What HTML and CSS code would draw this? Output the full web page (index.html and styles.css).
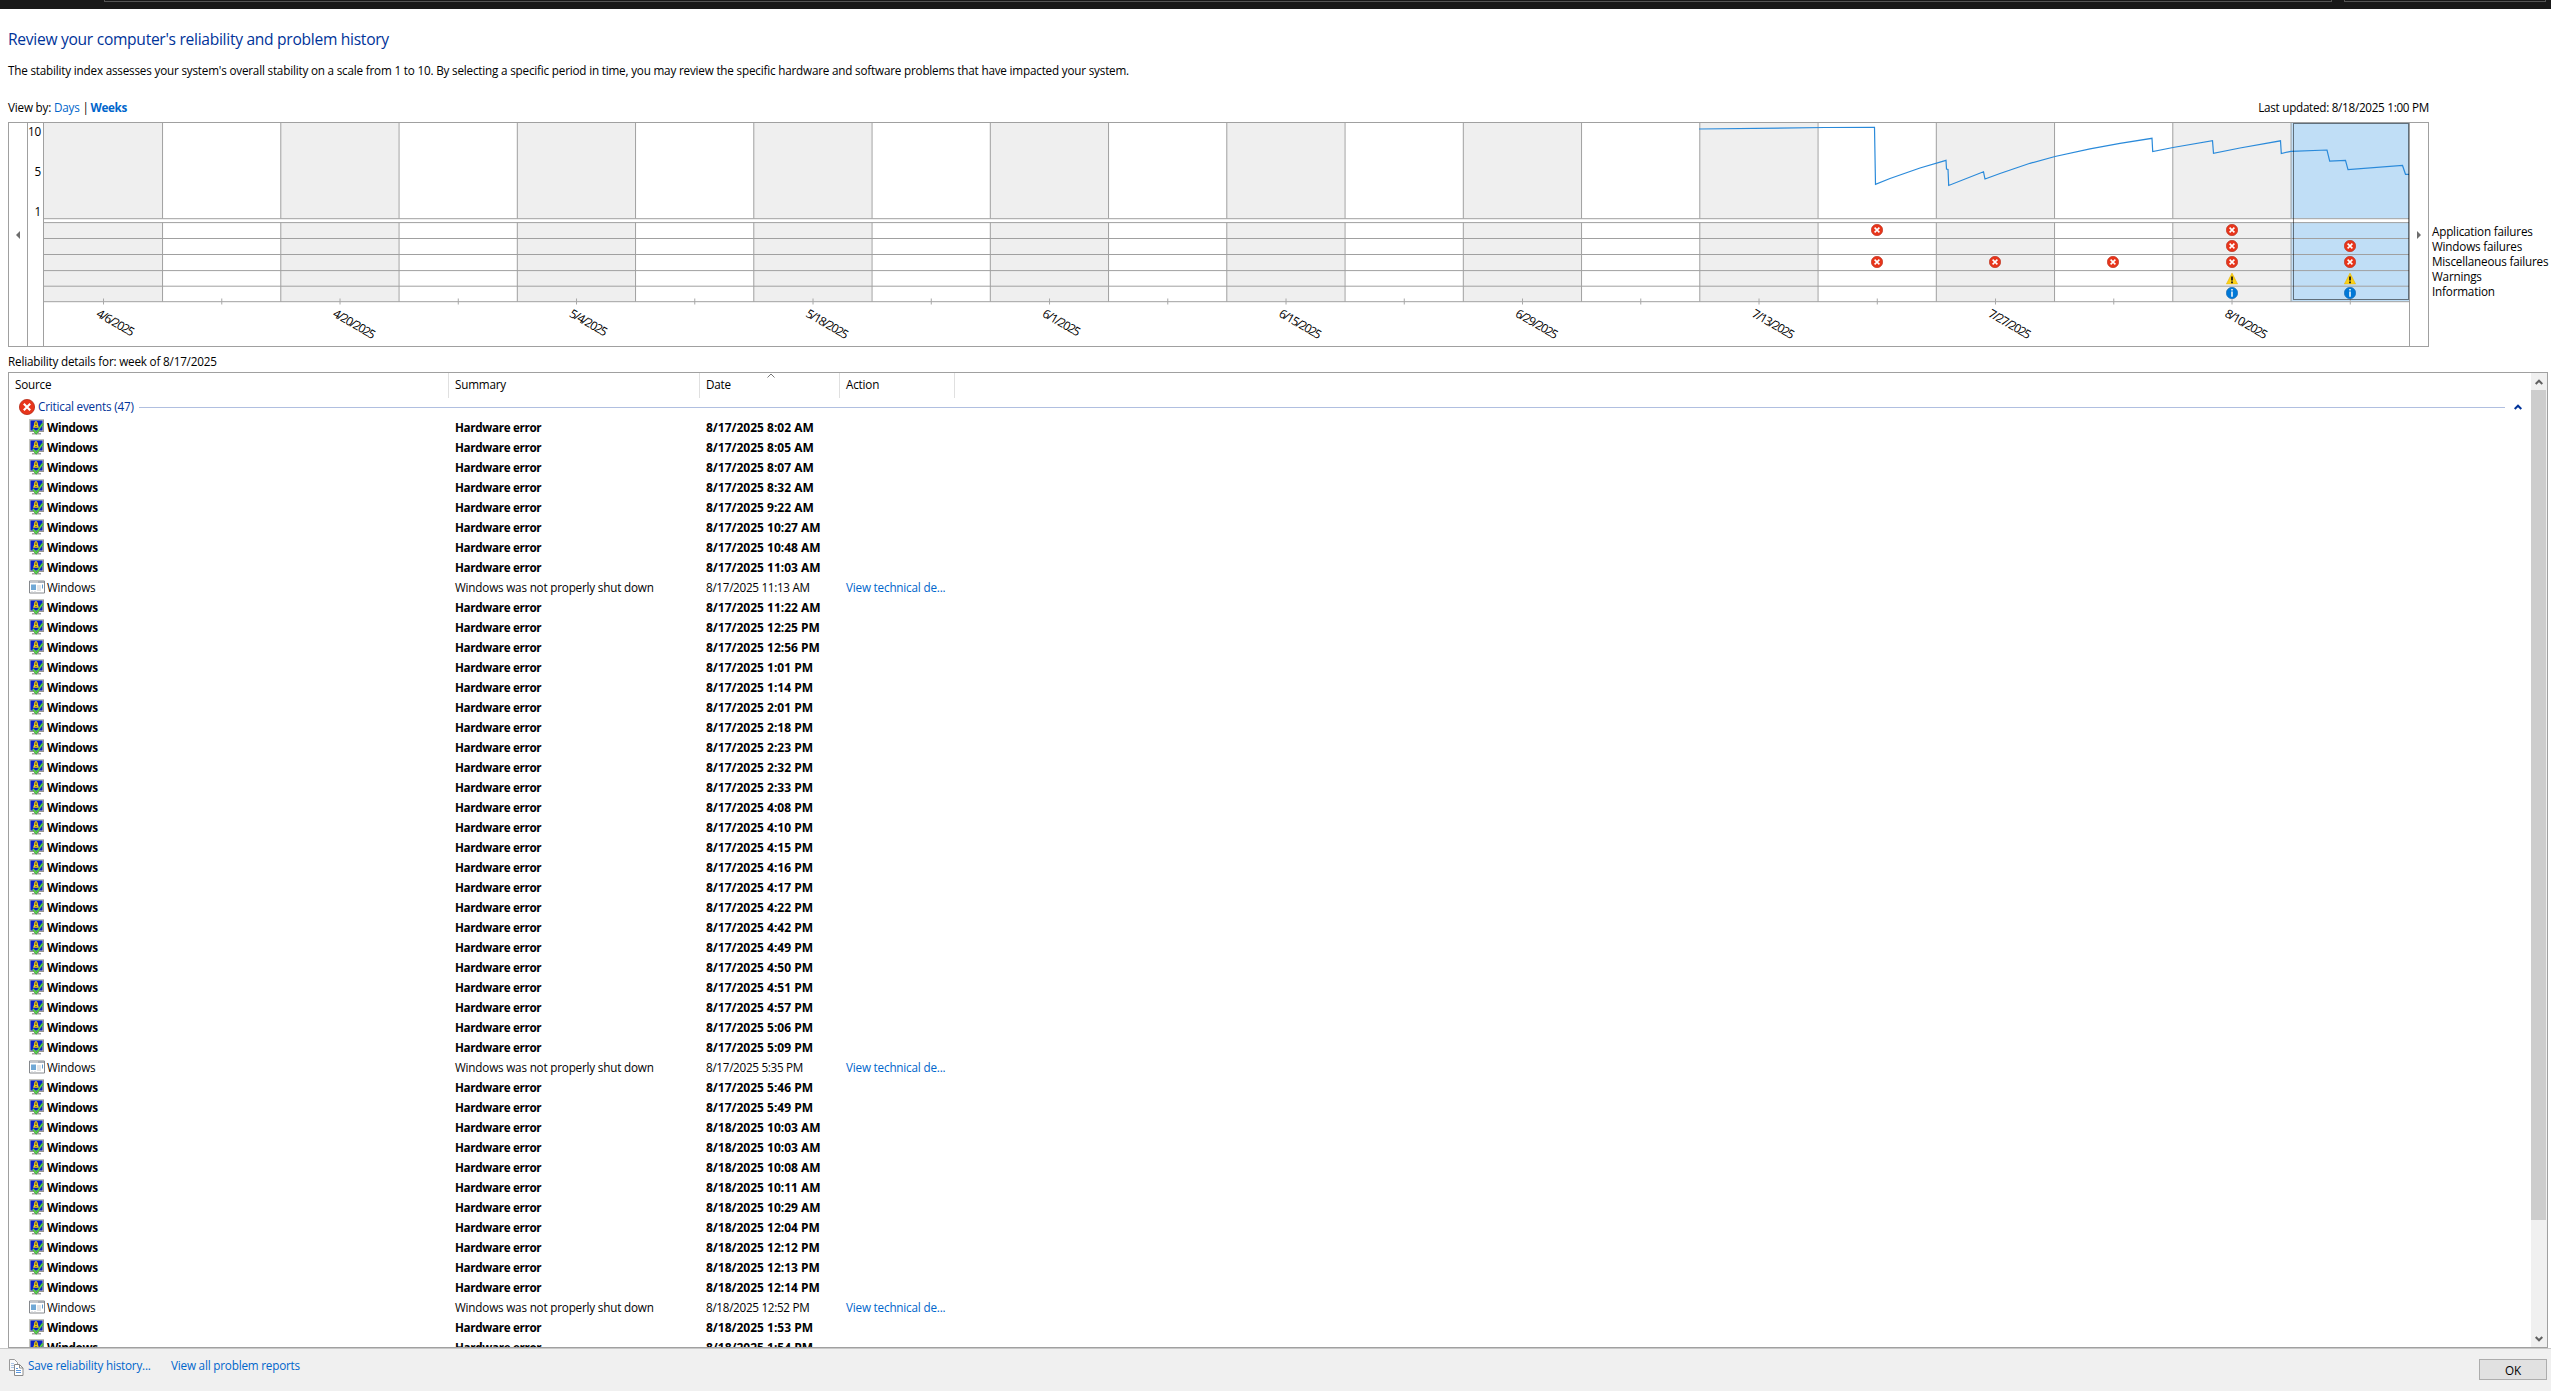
FILE: index.html
```html
<!DOCTYPE html>
<html lang="en">
<head>
  <meta charset="UTF-8" />
  <meta name="viewport" content="width=device-width, initial-scale=1.0"/>
  <title>Reliability Monitor</title>
  <link rel="stylesheet" href="styles.css">
</head>
<body>
  <svg class="sprite" xmlns="http://www.w3.org/2000/svg">
    <symbol id="icon-error" viewBox="0 0 16 16">
      <circle cx="8" cy="8" r="7.6" fill="#e8351b" stroke="#b52a15" stroke-width=".8"/>
      <path d="M4.8 4.8l6.4 6.4M11.2 4.8l-6.4 6.4" stroke="#fff" stroke-width="2.1"/>
    </symbol>
    <symbol id="icon-warning" viewBox="0 0 12 12">
      <path d="M6 .6L11.6 11.6H.4z" fill="#fcd116" stroke="#e8b400" stroke-width=".6"/>
      <path d="M6 4v4M6 9v1.7" stroke="#111" stroke-width="1.7"/>
    </symbol>
    <symbol id="icon-info" viewBox="0 0 12 12">
      <circle cx="6" cy="6" r="5.7" fill="#0078d7" stroke="#1464ac" stroke-width=".6"/>
      <path d="M6 2v1.5M6 4.5v5.3" stroke="#fff" stroke-width="1.5"/>
    </symbol>
    <symbol id="icon-monitor" viewBox="0 0 16 16">
      <path d="M0 0h15v13H0z" fill="#c4c4bc"/>
      <path d="M14 1h1v12H1v-1h13z" fill="#96968f"/>
      <path d="M1.5 1.5h12v10h-12z" fill="#0a22c8"/>
      <path d="M5 13h5v1H5zM3 14h9v1.5H3z" fill="#a5a5a0"/>
      <path d="M7 2c1.700 .2 1.800 2.300 2 3.700l1 3H4L5 5.700C5.200 4 5.300 2.200 7 2z" fill="#e8c820"/>
      <path d="M7 3.500v2.500M7 7v1" stroke="#4a3c00"/>
      <path d="M4 10l3.200 4L13.800 4.500" fill="none" stroke="#2a9a30" stroke-width="2"/>
      <path d="M4 10l3.200 4L13.800 4.500" fill="none" stroke="#5ed44e" stroke-width="1.300"/>
    </symbol>
    <symbol id="icon-window" viewBox="0 0 16 13">
      <path d="M.5 .5h15v12H.5z" fill="#fff" stroke="#85888c"/>
      <path d="M1 1h14v1.500H1z" fill="#c4c9d0"/>
      <path d="M9.500 1.500h1M11.500 1.500h1M13.500 1.500h1" stroke="#55606c"/>
      <path d="M2 4h5v5.500H2z" fill="#6fa8d6"/>
      <path d="M8 5.500h4M8 7.500h4M8 9.500h4M2 11.500h2M5 11.500h2" stroke="#c5c9ce"/>
      <path d="M13.500 4v4" stroke="#5d9bd0"/>
    </symbol>
    <symbol id="icon-copy" viewBox="0 0 15 17">
      <path d="M.5 .5h5l3 3v8h-8z" fill="#fafafa" stroke="#9a9a9a"/>
      <path d="M2 4.500h3M2 6.500h4M2 8.500h3" stroke="#a9c4e6"/>
      <path d="M5.500 5.500h5l3.500 3.500v7.500H5.500z" fill="#fff" stroke="#8a8a8a"/>
      <path d="M10.500 5.500V9H14" fill="none" stroke="#8a8a8a"/>
      <path d="M7 9.500h2M7 11.500h5M7 13.500h5" stroke="#5b97dd"/>
    </symbol>
    <symbol id="icon-chevron" viewBox="0 0 8 6">
      <path d="M.7 5L4 1.700 7.300 5" fill="none" stroke="currentColor" stroke-width="2"/>
    </symbol>
  </svg>

  <div class="titlebar">
    <div class="titlebar-main"></div>
    <div class="titlebar-side"></div>
  </div>

  <main class="content">
    <h1>Review your computer's reliability and problem history</h1>
    <p class="intro">The stability index assesses your system's overall stability on a scale from 1 to 10. By selecting a specific period in time, you may review the specific hardware and software problems that have impacted your system.</p>

    <div class="view-bar">
      <div class="view-by">View by: <a href="#">Days</a> | <a href="#" class="active">Weeks</a></div>
      <div class="updated">Last updated: 8/18/2025 1:00 PM</div>
    </div>

    <div class="chart-row">
      <div class="chart">
        <button class="scroll-btn"><svg width="4" height="8"><path d="M4 0v8L0 4z" fill="#6d6d6d"/></svg></button>
        <div class="axis"><span>10</span><span>5</span><span>1</span></div>
        <svg id="plot" class="plot" width="2365" height="223"></svg>
        <button class="scroll-btn next"><svg width="4" height="8"><path d="M0 0v8l4-4z" fill="#6d6d6d"/></svg></button>
      </div>
      <ul class="legend">
        <li>Application failures</li>
        <li>Windows failures</li>
        <li>Miscellaneous failures</li>
        <li>Warnings</li>
        <li>Information</li>
      </ul>
    </div>

    <p class="details-label">Reliability details for: week of 8/17/2025</p>

    <div class="list">
      <div class="list-body">
        <div class="list-head">
          <span>Source</span>
          <span>Summary</span>
          <span class="sorted">Date<svg width="8" height="5"><path d="M.5 4.500L4 1l3.500 3.500" fill="none" stroke="#777"/></svg></span>
          <span>Action</span>
        </div>
        <div class="group">
          <svg width="16" height="16"><use href="#icon-error"/></svg>
          <span class="group-name">Critical events (47)</span>
          <span class="group-line"></span>
          <svg class="collapse" width="8" height="6"><use href="#icon-chevron"/></svg>
        </div>
        <div id="rows"></div>
      </div>
      <div class="scrollbar">
        <svg width="8" height="6"><use href="#icon-chevron"/></svg>
        <div class="thumb"></div>
        <svg class="down" width="8" height="6"><use href="#icon-chevron"/></svg>
      </div>
    </div>
  </main>

  <footer>
    <svg width="15" height="17"><use href="#icon-copy"/></svg>
    <a href="#" class="save">Save reliability history...</a>
    <a href="#" class="reports">View all problem reports</a>
    <button class="ok">OK</button>
  </footer>
  <script src="monitor.js"></script>
</body>
</html>
```
FILE: styles.css
```css
* {
  box-sizing: border-box;
  margin: 0;
  padding: 0;
}
body {
  display: flex;
  flex-direction: column;
  height: 1391px;
  overflow: hidden;
  background: #fff;
  color: #000;
  font-family: 'Open Sans', 'Noto Sans', sans-serif;
  font-size: 11.7px;
  letter-spacing: -0.19px;
  line-height: 16px;
  white-space: nowrap;
}
a {
  color: #0066cc;
  text-decoration: none;
}
.sprite {
  display: none;
}
.titlebar {
  display: flex;
  gap: 12px;
  height: 9px;
  padding: 0 5px 0 104px;
  background: #191919;
}
.titlebar div {
  height: 2px;
  border: 1px solid #555;
  border-top: none;
}
.titlebar-main {
  flex: 1;
}
.titlebar-side {
  width: 202px;
}
.content {
  flex: 1;
  padding: 0 3px 0 8px;
}
h1 {
  margin-top: 19px;
  font-size: 15.6px;
  font-weight: normal;
  line-height: 22px;
  letter-spacing: -0.29px;
  color: #003399;
}
.intro {
  margin-top: 12px;
}
.view-bar {
  display: flex;
  justify-content: space-between;
  width: 2421px;
  margin-top: 21px;
}
.view-by .active {
  margin-left: -1px;
  font-weight: bold;
  letter-spacing: -0.35px;
}
.updated {
  letter-spacing: -0.28px;
}
.chart-row {
  display: flex;
  margin-top: 7px;
}
.chart {
  display: flex;
  width: 2421px;
  height: 225px;
  border: 1px solid #a0a0a0;
}
.scroll-btn {
  display: flex;
  align-items: center;
  justify-content: center;
  width: 19px;
  border: none;
  border-right: 1px solid #a0a0a0;
  background: #fff;
}
.scroll-btn.next {
  border-right: none;
  border-left: 1px solid #a0a0a0;
}
.axis {
  display: flex;
  flex-direction: column;
  gap: 24px;
  width: 16px;
  padding-right: 2px;
  border-right: 1px solid #a0a0a0;
  text-align: right;
}
.plot {
  display: block;
  font-size: 12px;
  letter-spacing: 0;
}
.legend {
  padding: 102px 0 0 3px;
  line-height: 15px;
  list-style: none;
}
.details-label {
  margin-top: 6px;
}
.list {
  display: flex;
  height: 976px;
  margin-top: 3px;
  border: 1px solid #a0a0a0;
}
.list-body {
  flex: 1;
  overflow: hidden;
}
.list-head {
  display: flex;
  height: 25px;
}
.list-head span {
  padding: 3px 0 0 6px;
  border-right: 1px solid #e0e0e0;
}
.list-head span:nth-child(1), .row span:nth-child(1) { width: 440px; }
.list-head span:nth-child(2), .row span:nth-child(2) { width: 251px; }
.list-head span:nth-child(3), .row span:nth-child(3) { width: 140px; }
.list-head span:nth-child(4) { width: 115px; }
.list-head .sorted {
  position: relative;
}
.sorted svg {
  position: absolute;
  top: 0;
  left: 67px;
}
.group {
  display: flex;
  align-items: center;
  height: 18px;
  margin-bottom: 2px;
  padding-left: 10px;
  color: #003399;
}
.group-name {
  width: 101px;
  margin: -2px 0 0 3px;
}
.group-line {
  flex: 1;
  height: 1px;
  background: #b0bfe0;
}
.collapse {
  margin: 0 9px 0 9px;
}
.row {
  display: flex;
  height: 20px;
  line-height: 18px;
}
.row span {
  padding-left: 6px;
}
.row .source {
  display: flex;
  align-items: center;
  gap: 2px;
  padding: 0 0 2px 20px;
}
.row .date {
  letter-spacing: -0.3px;
}
.row.new {
  font-weight: bold;
  letter-spacing: -0.34px;
}
.row.new .date {
  font-size: 12px;
  line-height: 20px;
  letter-spacing: 0;
}
.scrollbar {
  display: flex;
  flex-direction: column;
  align-items: center;
  width: 16px;
  padding: 6px 1px 5px 0;
  background: #f0f0f0;
  color: #606060;
}
.thumb {
  width: 15px;
  height: 830px;
  margin-top: 5px;
  background: #cdcdcd;
}
.down {
  margin-top: auto;
  transform: rotate(180deg);
}
footer {
  display: flex;
  height: 43px;
  padding: 10px 4px 0 9px;
  border-top: 1px solid #c8c8c8;
  background: #f0f0f0;
}
footer a {
  margin-top: -2px;
}
.save {
  width: 143px;
  margin-left: 4px;
}
.ok {
  width: 68px;
  height: 21px;
  margin-left: auto;
  border: 1px solid #adadad;
  background: #e1e1e1;
  font: inherit;
}
```
FILE: monitor.js
```js
const COL = 118.25;
const COLS = 20;

const labels = ['4/6/2025', '4/20/2025', '5/4/2025', '5/18/2025', '6/1/2025', '6/15/2025', '6/29/2025', '7/13/2025', '7/27/2025', '8/10/2025'];

const stability = '1655,6 1781,4.5 1830.5,4.3 1831.5,61.3 1846,55.5 1876,45 1902,37.3 1902.5,46 1904,46.5 1904.7,62.5 1939.5,48.8 1941,56 1956,50.5 1986,40.3 2011,33.5 2046,25.8 2076,20.3 2108,15.3 2108.7,28.5 2129,24.5 2168.5,17.7 2169.5,30.3 2196,25 2236.5,17.8 2237.3,30.5 2247,28.3 2283,27 2285.7,38.2 2301.5,37.4 2304,46.6 2358.5,42.5 2361.5,51.3 2366,51.3';

// [week, y of the icon centre, icon]
const marks = [
  [15, 107, 'error'], [15, 139, 'error'], [16, 139, 'error'], [17, 139, 'error'],
  [18, 107, 'error'], [18, 123, 'error'], [18, 139, 'error'], [18, 155.5, 'warning'], [18, 170, 'info'],
  [19, 123, 'error'], [19, 139, 'error'], [19, 155.5, 'warning'], [19, 170, 'info']
];

function drawPlot() {
  let out = '';
  for (let i = 0; i < COLS; i++) {
    const x = i * COL;
    const fill = i === COLS - 1 ? '#c0def6' : (i % 2 === 0 ? '#efefef' : '#fff');
    out += `<rect x="${x}" y="0" width="${COL}" height="95.5" fill="${fill}"/>`;
    out += `<rect x="${x}" y="99.5" width="${COL}" height="79" fill="${fill}"/>`;
    if (i > 0) out += `<path d="M${x + 0.3} 0V95.5M${x + 0.3} 99.5V178.7" stroke="#a0a0a0"/>`;
  }
  [95.7, 99.6, 115.5, 131.5, 147.6, 163.2, 178.7].forEach(y => {
    out += `<path d="M0 ${y}H2365" stroke="#a0a0a0"/>`;
  });
  for (let i = 0; i < COLS; i++) {
    const x = (i + 0.5) * COL + 0.4;
    out += `<path d="M${x} 175.5V181.5" stroke="#a8a8a8"/>`;
    if (i % 2 === 0) {
      const text = labels[i / 2];
      out += `<text transform="translate(${x - 8} 193) rotate(30)" textLength="${text.length * 5.2}">${text}</text>`;
    }
  }
  out += `<polyline points="${stability}" fill="none" stroke="#2a8ada" stroke-width="1.2"/>`;
  marks.forEach(([week, y, icon]) => {
    out += `<use href="#icon-${icon}" x="${Math.round((week + 0.5) * COL) - 6}" y="${y - 6}" width="12" height="12"/>`;
  });
  out += '<rect x="2249.5" y="0.5" width="115" height="176" fill="none" stroke="#000" stroke-dasharray="1 1"/>';
  document.getElementById('plot').innerHTML = out;
}

const shutdowns = [8, 32, 44];
const dates = [
  '8/17/2025 8:02 AM', '8/17/2025 8:05 AM', '8/17/2025 8:07 AM', '8/17/2025 8:32 AM', '8/17/2025 9:22 AM',
  '8/17/2025 10:27 AM', '8/17/2025 10:48 AM', '8/17/2025 11:03 AM', '8/17/2025 11:13 AM', '8/17/2025 11:22 AM',
  '8/17/2025 12:25 PM', '8/17/2025 12:56 PM', '8/17/2025 1:01 PM', '8/17/2025 1:14 PM', '8/17/2025 2:01 PM',
  '8/17/2025 2:18 PM', '8/17/2025 2:23 PM', '8/17/2025 2:32 PM', '8/17/2025 2:33 PM', '8/17/2025 4:08 PM',
  '8/17/2025 4:10 PM', '8/17/2025 4:15 PM', '8/17/2025 4:16 PM', '8/17/2025 4:17 PM', '8/17/2025 4:22 PM',
  '8/17/2025 4:42 PM', '8/17/2025 4:49 PM', '8/17/2025 4:50 PM', '8/17/2025 4:51 PM', '8/17/2025 4:57 PM',
  '8/17/2025 5:06 PM', '8/17/2025 5:09 PM', '8/17/2025 5:35 PM', '8/17/2025 5:46 PM', '8/17/2025 5:49 PM',
  '8/18/2025 10:03 AM', '8/18/2025 10:03 AM', '8/18/2025 10:08 AM', '8/18/2025 10:11 AM', '8/18/2025 10:29 AM',
  '8/18/2025 12:04 PM', '8/18/2025 12:12 PM', '8/18/2025 12:13 PM', '8/18/2025 12:14 PM', '8/18/2025 12:52 PM',
  '8/18/2025 1:53 PM', '8/18/2025 1:54 PM'
];

function drawRows() {
  document.getElementById('rows').innerHTML = dates.map((date, i) => {
    const shutdown = shutdowns.includes(i);
    return `<div class="row ${shutdown ? '' : 'new'}">
      <span class="source"><svg width="16" height="16"><use href="#icon-${shutdown ? 'window' : 'monitor'}"/></svg>Windows</span>
      <span>${shutdown ? 'Windows was not properly shut down' : 'Hardware error'}</span>
      <span class="date">${date}</span>
      ${shutdown ? '<span><a href="#">View technical de...</a></span>' : ''}
    </div>`;
  }).join('');
}

drawPlot();
drawRows();
```
